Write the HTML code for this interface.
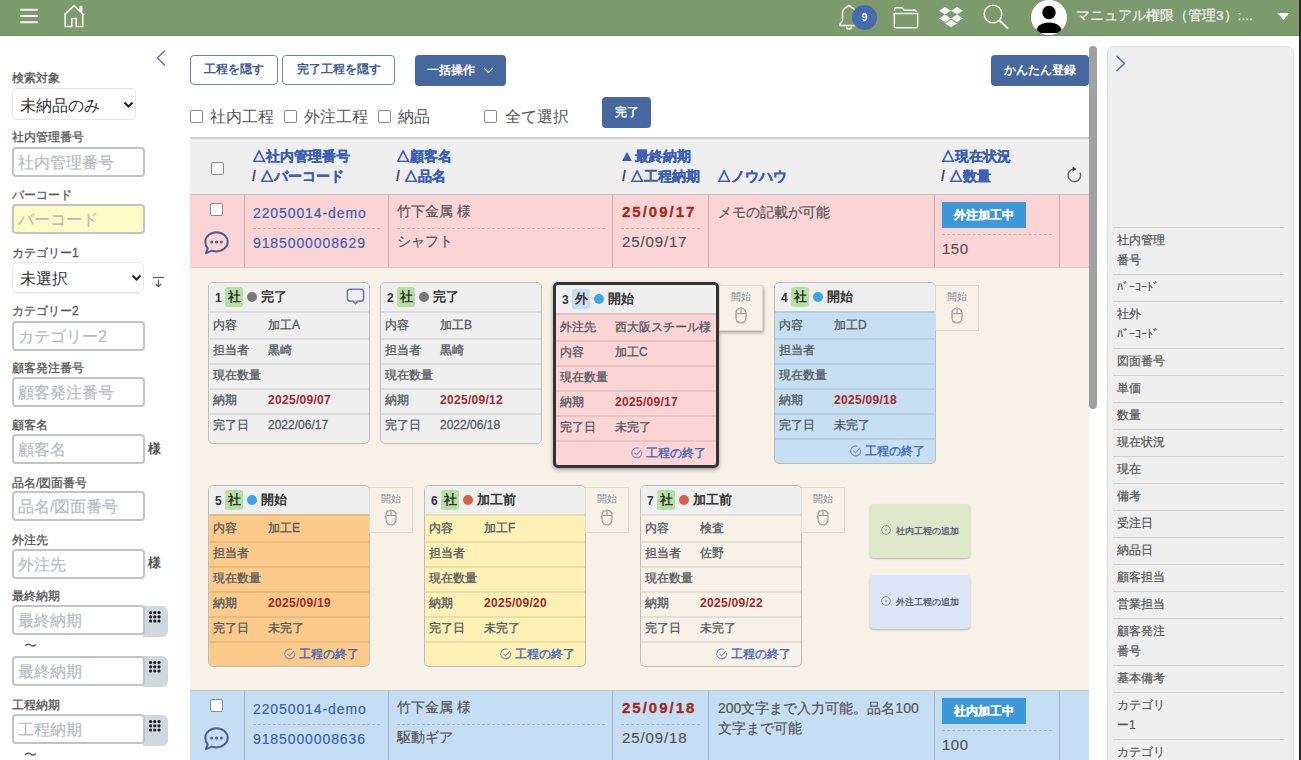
<!DOCTYPE html>
<html lang="ja">
<head>
<meta charset="utf-8">
<style>
*{box-sizing:border-box;margin:0;padding:0}
html,body{width:1301px;height:760px;overflow:hidden;background:#fff;font-family:"Liberation Sans",sans-serif;color:#444;position:relative}
.a{position:absolute}
#hdr{left:0;top:0;width:1301px;height:36px;background:#7b9a6e;border-bottom:1px solid #6f8d63}
.lbl{position:absolute;left:12px;font-size:12px;line-height:14px;font-weight:normal;-webkit-text-stroke:0.3px #555;color:#555;white-space:nowrap}
.inp{position:absolute;left:12px;width:133px;height:30px;border:2px solid #c3c3c3;border-radius:4px;background:#fff;font-size:16px;line-height:27px;padding-left:4px;color:#b3b9c1;white-space:nowrap;-webkit-text-stroke:0.15px #b3b9c1}
.sel{position:absolute;left:12px;border:1px solid #e6e6e6;border-radius:5px;background:#fff;font-size:16px;line-height:30px;padding-left:7px;color:#333;white-space:nowrap}
.cal{position:absolute;left:143px;width:25px;height:31px;background:#cdd9de;border-radius:0 6px 6px 0}
.sama{position:absolute;left:148px;font-size:13px;font-weight:bold;color:#555;line-height:14px}
.btno{position:absolute;top:55px;height:30px;border:1.5px solid #6b84b0;border-radius:4px;font-size:12px;font-weight:bold;color:#3e5d91;text-align:center;line-height:27px;white-space:nowrap;background:#fff}
.btnf{position:absolute;background:#46689f;border-radius:4px;color:#fff;font-size:12px;font-weight:bold;text-align:center;white-space:nowrap}
.cb{position:absolute;width:13px;height:13px;border:1.5px solid #8a8a8a;border-radius:2px;background:#fff}
.cbl{position:absolute;top:106.5px;font-size:16px;line-height:20px;color:#555;white-space:nowrap}
#tbl{left:190px;top:137px;width:899px;height:623px;overflow:hidden}
.th{position:absolute;font-size:14px;line-height:20.5px;font-weight:bold;color:#3b5fb5;white-space:nowrap;-webkit-text-stroke:0.25px #3b5fb5}
.th i{-webkit-text-stroke:0}
.th i{font-style:normal;color:#444}
.row{position:absolute;left:0;width:899px}
.vd{position:absolute;top:0;width:1px;background:rgba(0,0,0,.18)}
.lk{position:absolute;font-size:14px;line-height:18px;color:#3d5fb8;letter-spacing:0.9px;white-space:nowrap;-webkit-text-stroke:0.2px #3d5fb8}
.tx{position:absolute;font-size:14px;line-height:18px;color:#555;white-space:nowrap;-webkit-text-stroke:0.2px #555}
.dot{position:absolute;height:0;border-top:1px dashed rgba(0,0,0,.17)}
.badge{position:absolute;width:84px;height:26px;background:#3b98d9;color:#fff;font-size:12px;font-weight:bold;text-align:center;line-height:26px;-webkit-text-stroke:0.3px #fff}
.card{position:absolute;width:162px;border:1px solid #bdbdbd;border-radius:5px;background:#efefef;overflow:hidden;font-size:12px;color:#545a60}
.cr span{-webkit-text-stroke:0.3px #545a60}
.ch{height:28px;background:#efefef;position:relative;white-space:nowrap}
.ch .n{position:absolute;left:6px;top:8px;font-weight:bold;font-size:12px;line-height:14px;color:#333}
.ch .bg{position:absolute;left:16px;top:4px;width:18px;height:20px;border-radius:3px;background:#b7dea3;color:#333;font-weight:bold;font-size:13px;line-height:20px;text-align:center}
.ch .bg.o{background:#c9dcf4}
.ch .d{position:absolute;left:38px;top:9px;width:10px;height:10px;border-radius:50%;background:#777}
.ch .st{position:absolute;left:52px;top:6px;font-weight:bold;font-size:13px;line-height:16px;color:#333}
.cr{height:25px;border-top:2px solid rgba(0,0,0,.08);position:relative;white-space:nowrap;line-height:23px}
.cr.f1{height:26.5px;line-height:24.5px}
.cr .l{position:absolute;left:4px;top:-0.5px}
.cr .v{position:absolute;left:59px;top:-0.5px}
.cr .v.r{color:#a6282a;font-weight:bold;letter-spacing:0.3px;-webkit-text-stroke:0}
.cf{height:25px;border-top:2px solid rgba(0,0,0,.08);position:relative;text-align:right;padding-right:10px;line-height:22px;color:#4466b8;font-size:12px;white-space:nowrap;-webkit-text-stroke:0.35px #4466b8}
.hov{position:absolute;width:44px;height:46px;border:1px solid #dedad2;background:#f8f1e7;text-align:center;font-size:10px;color:#7d8797;line-height:12px;padding-top:5px}
.addb{position:absolute;width:100px;border-radius:4px;box-shadow:0 1px 2px rgba(0,0,0,.25);font-size:9px;font-weight:bold;color:#5a6378;text-align:center;white-space:nowrap}
#rp{left:1107px;top:46px;width:187px;height:720px;background:#efefef;border:1px solid #dcdcdc;border-radius:7px}
.rr{position:absolute;left:5px;width:171px;border-top:1px solid #cfcfcf;font-size:12px;line-height:20px;color:#555;padding:2px 4px;-webkit-text-stroke:0.2px #555}
</style>
</head>
<body>
<div id="hdr" class="a">
<svg class="a" style="left:19px;top:7px" width="20" height="18" viewBox="0 0 20 18"><g stroke="#eef5e6" stroke-width="2" stroke-linecap="round"><line x1="2" y1="2.7" x2="18" y2="2.7"/><line x1="2" y1="9" x2="18" y2="9"/><line x1="2" y1="15.3" x2="18" y2="15.3"/></g></svg>
<svg class="a" style="left:62px;top:4px" width="24" height="24" viewBox="0 0 24 24"><path d="M2.8 10.4L12 1.6l6.3 6V2.6h1.3v6.3l2 1.7 M3.2 10.3V22.5h6.6v-8h4.4v8h6.6V10.3" fill="none" stroke="#eef5e6" stroke-width="1.7" stroke-linejoin="round" stroke-linecap="round"/></svg>
<svg class="a" style="left:838px;top:3px" width="22" height="28" viewBox="0 0 22 28"><path d="M11 2.5c-.9 0-1.3.6-1.3 1.3-3.3.8-5.2 3.6-5.2 7v6.5L2 21.5v1h18v-1l-2.5-4.2V10.8c0-3.4-1.9-6.2-5.2-7 0-.7-.4-1.3-1.3-1.3z M8.5 23.5a2.5 2.5 0 0 0 5 0" fill="none" stroke="#eef5e6" stroke-width="1.5" stroke-linejoin="round"/></svg>
<div class="a" style="left:852px;top:5px;width:25px;height:25px;border-radius:50%;background:#4769ad;color:#fff;font-size:10px;font-weight:bold;text-align:center;line-height:25px">9</div>
<svg class="a" style="left:892px;top:6px" width="28" height="23" viewBox="0 0 28 23"><path d="M2.5 5V3.2c0-.9.6-1.5 1.5-1.5h6.2l2 2.6h10.6c.9 0 1.5.6 1.5 1.5V6 M2.3 7.5h23.4v12.8c0 .9-.6 1.5-1.5 1.5H3.8c-.9 0-1.5-.6-1.5-1.5z" fill="none" stroke="#eef5e6" stroke-width="1.5" stroke-linejoin="round"/></svg>
<svg class="a" style="left:938px;top:6px" width="26" height="23" viewBox="0 0 26 23"><g fill="#f3f7ef"><path d="M7 1L1 4.8l6 3.8 6-3.8z"/><path d="M19 1l-6 3.8 6 3.8 6-3.8z"/><path d="M1 12.4l6 3.8 6-3.8-6-3.8z"/><path d="M25 12.4l-6 3.8-6-3.8 6-3.8z"/><path d="M7 17.5l6 3.8 6-3.8-6-3.8z"/></g></svg>
<svg class="a" style="left:982px;top:3px" width="28" height="27" viewBox="0 0 28 27"><circle cx="11" cy="11" r="8.8" fill="none" stroke="#eef5e6" stroke-width="1.6"/><line x1="17.6" y1="17.6" x2="25.5" y2="25" stroke="#eef5e6" stroke-width="2" stroke-linecap="round"/></svg>
<div class="a" style="left:1031px;top:0px;width:36px;height:35px;border-radius:50%;background:#fff;overflow:hidden"><svg width="36" height="35" viewBox="0 0 36 35"><circle cx="18" cy="12.5" r="6.7" fill="#000"/><path d="M5 33c0-7 5.5-10.5 13-10.5S31 26 31 33z" fill="#000"/></svg></div>
<div class="a" style="left:1076px;top:7px;font-size:13.7px;line-height:18px;color:#eef3ea;white-space:nowrap;-webkit-text-stroke:0.25px #eef3ea">マニュアル権限（管理3）:...</div>
<svg class="a" style="left:1277px;top:12px" width="13" height="9" viewBox="0 0 13 9"><path d="M0.5 1h12l-6 7z" fill="#fff"/></svg>
</div>
<div class="a" style="left:1299px;top:0;width:2px;height:760px;background:#2b2b2b"></div>
<div class="lbl" style="top:71px">検索対象</div>
<div class="sel" style="top:88px;width:124px;height:32px;line-height:34px">未納品のみ</div>
<div class="lbl" style="top:130px">社内管理番号</div>
<div class="inp" style="top:147px">社内管理番号</div>
<div class="lbl" style="top:188px">バーコード</div>
<div class="inp" style="top:204px;background:#fdfbc6">バーコード</div>
<div class="lbl" style="top:246px">カテゴリー1</div>
<div class="sel" style="top:262px;width:132px;height:31px;line-height:32px">未選択</div>
<div class="lbl" style="top:304px">カテゴリー2</div>
<div class="inp" style="top:321px">カテゴリー2</div>
<div class="lbl" style="top:361px">顧客発注番号</div>
<div class="inp" style="top:377px">顧客発注番号</div>
<div class="lbl" style="top:418px">顧客名</div>
<div class="inp" style="top:434px">顧客名</div>
<div class="sama" style="top:442px">様</div>
<div class="lbl" style="top:476px">品名/図面番号</div>
<div class="inp" style="top:491px">品名/図面番号</div>
<div class="lbl" style="top:533px">外注先</div>
<div class="inp" style="top:549px">外注先</div>
<div class="sama" style="top:556px">様</div>
<div class="lbl" style="top:589px">最終納期</div>
<div class="cal" style="top:606px"></div>
<div class="inp" style="top:605px">最終納期</div>
<div class="cal" style="top:656px"></div>
<div class="inp" style="top:656px">最終納期</div>
<div class="lbl" style="top:698px">工程納期</div>
<div class="cal" style="top:715px"></div>
<div class="inp" style="top:714px">工程納期</div>
<svg class="a" style="left:123px;top:101px" width="11" height="8" viewBox="0 0 11 8"><path d="M1.5 1.5l4 4 4-4" fill="none" stroke="#222" stroke-width="2"/></svg><svg class="a" style="left:131px;top:274px" width="11" height="8" viewBox="0 0 11 8"><path d="M1.5 1.5l4 4 4-4" fill="none" stroke="#222" stroke-width="2"/></svg>
<svg class="a" style="left:152px;top:276px" width="13" height="12" viewBox="0 0 13 12"><g stroke="#555" stroke-width="1.2" fill="none"><line x1="1" y1="1.5" x2="12" y2="1.5"/><line x1="6.5" y1="3.5" x2="6.5" y2="10.5"/><path d="M3.8 8l2.7 2.7 2.7-2.7"/></g></svg>
<svg class="a" style="left:149px;top:611px" width="12" height="12" viewBox="0 0 12 12"><g fill="#1a1a1a"><circle cx="1.6" cy="1.6" r="1.6"/><circle cx="1.6" cy="5.8" r="1.6"/><circle cx="1.6" cy="10.0" r="1.6"/><circle cx="5.8" cy="1.6" r="1.6"/><circle cx="5.8" cy="5.8" r="1.6"/><circle cx="5.8" cy="10.0" r="1.6"/><circle cx="10.0" cy="1.6" r="1.6"/><circle cx="10.0" cy="5.8" r="1.6"/><circle cx="10.0" cy="10.0" r="1.6"/></g></svg><svg class="a" style="left:149px;top:661px" width="12" height="12" viewBox="0 0 12 12"><g fill="#1a1a1a"><circle cx="1.6" cy="1.6" r="1.6"/><circle cx="1.6" cy="5.8" r="1.6"/><circle cx="1.6" cy="10.0" r="1.6"/><circle cx="5.8" cy="1.6" r="1.6"/><circle cx="5.8" cy="5.8" r="1.6"/><circle cx="5.8" cy="10.0" r="1.6"/><circle cx="10.0" cy="1.6" r="1.6"/><circle cx="10.0" cy="5.8" r="1.6"/><circle cx="10.0" cy="10.0" r="1.6"/></g></svg><svg class="a" style="left:149px;top:720px" width="12" height="12" viewBox="0 0 12 12"><g fill="#1a1a1a"><circle cx="1.6" cy="1.6" r="1.6"/><circle cx="1.6" cy="5.8" r="1.6"/><circle cx="1.6" cy="10.0" r="1.6"/><circle cx="5.8" cy="1.6" r="1.6"/><circle cx="5.8" cy="5.8" r="1.6"/><circle cx="5.8" cy="10.0" r="1.6"/><circle cx="10.0" cy="1.6" r="1.6"/><circle cx="10.0" cy="5.8" r="1.6"/><circle cx="10.0" cy="10.0" r="1.6"/></g></svg>
<div class="a" style="left:24px;top:639px;font-size:13px;color:#555;line-height:14px">〜</div>
<div class="a" style="left:24px;top:748px;font-size:13px;color:#555;line-height:14px">〜</div>
<svg class="a" style="left:155px;top:49px" width="12" height="18" viewBox="0 0 12 18"><path d="M10 1.5L2.5 9l7.5 7.5" fill="none" stroke="#5a74b8" stroke-width="1.5"/></svg>
<div class="btno" style="left:190px;width:88px">工程を隠す</div>
<div class="btno" style="left:282px;width:113px">完了工程を隠す</div>
<div class="btnf" style="left:415px;top:55px;width:91px;height:31px;line-height:31px;text-align:left;padding-left:12px">一括操作<svg class="a" style="left:68px;top:12px" width="11" height="7" viewBox="0 0 11 7"><path d="M1 1l4.5 4.5L10 1" fill="none" stroke="#d5deed" stroke-width="1.1"/></svg></div>
<div class="btnf" style="left:991px;top:55px;width:98px;height:31px;line-height:31px">かんたん登録</div>
<div class="btnf" style="left:602px;top:97px;width:49px;height:31px;line-height:31px">完了</div>
<div class="cb" style="left:190px;top:110px"></div><div class="cbl" style="left:210px">社内工程</div>
<div class="cb" style="left:284px;top:110px"></div><div class="cbl" style="left:304px">外注工程</div>
<div class="cb" style="left:378px;top:110px"></div><div class="cbl" style="left:398px">納品</div>
<div class="cb" style="left:484px;top:110px"></div><div class="cbl" style="left:505px">全て選択</div>
<div id="tbl" class="a"><div class="row" style="top:0;height:57px;background:#efefef;border-top:2px solid #cfcfcf"></div><div class="cb" style="left:21px;top:25px"></div><div class="th" style="left:62px;top:8.5px">△社内管理番号<br><i>/</i> △バーコード</div><div class="th" style="left:206px;top:8.5px">△顧客名<br><i>/</i> △品名</div><div class="th" style="left:432px;top:8.5px"><svg width="10" height="9" viewBox="0 0 10 9" style="vertical-align:0px;margin-right:3px"><path d="M5 0L10 9H0z" fill="#3b5fb5"/></svg>最終納期<br><i>/</i> △工程納期</div><div class="th" style="left:527px;top:29px">△ノウハウ</div><div class="th" style="left:751px;top:8.5px">△現在状況<br><i>/</i> △数量</div><svg class="a" style="left:876px;top:30px" width="16" height="16" viewBox="0 0 16 16"><path d="M8.2 2 A6.3 6.3 0 1 0 14 5.6" fill="none" stroke="#6a6a6a" stroke-width="1.5"/><path d="M6.6 -0.4 L10.6 2 L6.6 4.4 z" fill="#3a3a48"/></svg><div class="row" style="top:57px;height:75px;background:#fbd4d5;border-top:1px solid #c4c4c4"><div class="vd" style="left:54px;height:75px"></div><div class="vd" style="left:198px;height:75px"></div><div class="vd" style="left:422px;height:75px"></div><div class="vd" style="left:518px;height:75px"></div><div class="vd" style="left:744px;height:75px"></div><div class="vd" style="left:869px;height:75px"></div></div><div class="cb" style="left:20px;top:66px"></div><div class="a" style="left:13px;top:93px"><svg width="27" height="25" viewBox="0 0 27 25"><path d="M13.5 2.2c6.2 0 11.2 4.3 11.2 9.6S19.7 21.4 13.5 21.4c-1.6 0-3.1-.3-4.6-.8L3 23.2l1.7-4.8C3.1 16.7 2.3 14.4 2.3 11.8 2.3 6.5 7.3 2.2 13.5 2.2z" fill="none" stroke="#4f5d93" stroke-width="2" stroke-linejoin="round"/><circle cx="8.7" cy="12" r="1.5" fill="#4f5d93"/><circle cx="13.5" cy="12" r="1.5" fill="#4f5d93"/><circle cx="18.3" cy="12" r="1.5" fill="#4f5d93"/></svg></div><div class="lk" style="left:63px;top:67px">22050014-demo</div><div class="dot" style="left:63px;top:91px;width:127px"></div><div class="lk" style="left:63px;top:97px">9185000008629</div><div class="tx" style="left:207px;top:65px">竹下金属 様</div><div class="dot" style="left:207px;top:91px;width:208px"></div><div class="tx" style="left:207px;top:95px">シャフト</div><div class="tx" style="left:432px;top:66px;font-size:15px;font-weight:bold;color:#a52a1e;letter-spacing:2px;-webkit-text-stroke:0.3px #a52a1e">25/09/17</div><div class="dot" style="left:431px;top:91px;width:79px"></div><div class="tx" style="left:432px;top:96px;font-size:15px;letter-spacing:0.9px">25/09/17</div><div class="tx" style="left:528px;top:65px;width:210px;white-space:normal;line-height:20px">メモの記載が可能</div><div class="badge" style="left:752px;top:65px">外注加工中</div><div class="dot" style="left:752px;top:97px;width:110px"></div><div class="tx" style="left:752px;top:103px;font-size:15px;letter-spacing:0.5px">150</div><div class="row" style="top:130px;height:423px;background:#f8f1e7;border-top:1px solid #d0d0d0"></div></div>
<div class="card" style="left:208px;top:282px;width:162px;background:#efefef;"><div class="ch"><span class="n">1</span><span class="bg">社</span><span class="d" style="background:#777"></span><span class="st">完了</span><svg class="a" style="left:137px;top:5px" width="19" height="17" viewBox="0 0 19 17"><path d="M4 1.3h11a2.6 2.6 0 0 1 2.6 2.6v6.6a2.6 2.6 0 0 1-2.6 2.6h-3L9.5 15.6 7 13.1H4a2.6 2.6 0 0 1-2.6-2.6V3.9A2.6 2.6 0 0 1 4 1.3z" fill="none" stroke="#6f7db3" stroke-width="1.6" stroke-linejoin="round"/></svg></div><div class="cr f1"><span class="l">内容</span><span class="v">加工A</span></div><div class="cr"><span class="l">担当者</span><span class="v">黒崎</span></div><div class="cr"><span class="l">現在数量</span><span class="v"></span></div><div class="cr"><span class="l">納期</span><span class="v r">2025/09/07</span></div><div class="cr"><span class="l">完了日</span><span class="v">2022/06/17</span></div><div style="height:5px"></div></div><div class="card" style="left:380px;top:282px;width:162px;background:#efefef;"><div class="ch"><span class="n">2</span><span class="bg">社</span><span class="d" style="background:#777"></span><span class="st">完了</span></div><div class="cr f1"><span class="l">内容</span><span class="v">加工B</span></div><div class="cr"><span class="l">担当者</span><span class="v">黒崎</span></div><div class="cr"><span class="l">現在数量</span><span class="v"></span></div><div class="cr"><span class="l">納期</span><span class="v r">2025/09/12</span></div><div class="cr"><span class="l">完了日</span><span class="v">2022/06/18</span></div><div style="height:5px"></div></div><div class="card" style="left:553px;top:282px;width:166px;background:#fbd4d5;border:3px solid #333;box-shadow:0 2px 4px rgba(0,0,0,.35);"><div class="ch"><span class="n">3</span><span class="bg o">外</span><span class="d" style="background:#3ba6e0"></span><span class="st">開始</span></div><div class="cr f1"><span class="l">外注先</span><span class="v">西大阪スチール様</span></div><div class="cr"><span class="l">内容</span><span class="v">加工C</span></div><div class="cr"><span class="l">現在数量</span><span class="v"></span></div><div class="cr"><span class="l">納期</span><span class="v r">2025/09/17</span></div><div class="cr"><span class="l">完了日</span><span class="v">未完了</span></div><div class="cf"><svg width="12" height="12" viewBox="0 0 12 12" style="vertical-align:-2px;margin-right:3px"><path d="M10.6 4.6A5 5 0 1 1 7.8 1.3" fill="none" stroke="#7f8cc0" stroke-width="1.1"/><path d="M3.5 5.8l2 2 4.6-4.8" fill="none" stroke="#7f8cc0" stroke-width="1.1"/></svg>工程の終了</div></div><div class="hov" style="left:719px;top:285px;box-shadow:1px 2px 3px rgba(0,0,0,.3);">開始<br><svg width="12" height="17" viewBox="0 0 12 17" style="margin-top:4px"><rect x="1" y="1" width="10" height="15" rx="5" fill="none" stroke="#999" stroke-width="1.2"/><line x1="6" y1="1.5" x2="6" y2="6" stroke="#999" stroke-width="1.2"/><line x1="1.5" y1="6.5" x2="10.5" y2="6.5" stroke="#999" stroke-width="1"/></svg></div><div class="card" style="left:774px;top:282px;width:162px;background:#c6dff3;"><div class="ch"><span class="n">4</span><span class="bg">社</span><span class="d" style="background:#3ba6e0"></span><span class="st">開始</span></div><div class="cr f1"><span class="l">内容</span><span class="v">加工D</span></div><div class="cr"><span class="l">担当者</span><span class="v"></span></div><div class="cr"><span class="l">現在数量</span><span class="v"></span></div><div class="cr"><span class="l">納期</span><span class="v r">2025/09/18</span></div><div class="cr"><span class="l">完了日</span><span class="v">未完了</span></div><div class="cf"><svg width="12" height="12" viewBox="0 0 12 12" style="vertical-align:-2px;margin-right:3px"><path d="M10.6 4.6A5 5 0 1 1 7.8 1.3" fill="none" stroke="#7f8cc0" stroke-width="1.1"/><path d="M3.5 5.8l2 2 4.6-4.8" fill="none" stroke="#7f8cc0" stroke-width="1.1"/></svg>工程の終了</div></div><div class="hov" style="left:935px;top:285px;">開始<br><svg width="12" height="17" viewBox="0 0 12 17" style="margin-top:4px"><rect x="1" y="1" width="10" height="15" rx="5" fill="none" stroke="#999" stroke-width="1.2"/><line x1="6" y1="1.5" x2="6" y2="6" stroke="#999" stroke-width="1.2"/><line x1="1.5" y1="6.5" x2="10.5" y2="6.5" stroke="#999" stroke-width="1"/></svg></div><div class="card" style="left:208px;top:485px;width:162px;background:#fccb8c;"><div class="ch"><span class="n">5</span><span class="bg">社</span><span class="d" style="background:#3ba6e0"></span><span class="st">開始</span></div><div class="cr f1"><span class="l">内容</span><span class="v">加工E</span></div><div class="cr"><span class="l">担当者</span><span class="v"></span></div><div class="cr"><span class="l">現在数量</span><span class="v"></span></div><div class="cr"><span class="l">納期</span><span class="v r">2025/09/19</span></div><div class="cr"><span class="l">完了日</span><span class="v">未完了</span></div><div class="cf"><svg width="12" height="12" viewBox="0 0 12 12" style="vertical-align:-2px;margin-right:3px"><path d="M10.6 4.6A5 5 0 1 1 7.8 1.3" fill="none" stroke="#7f8cc0" stroke-width="1.1"/><path d="M3.5 5.8l2 2 4.6-4.8" fill="none" stroke="#7f8cc0" stroke-width="1.1"/></svg>工程の終了</div></div><div class="hov" style="left:369px;top:487px;">開始<br><svg width="12" height="17" viewBox="0 0 12 17" style="margin-top:4px"><rect x="1" y="1" width="10" height="15" rx="5" fill="none" stroke="#999" stroke-width="1.2"/><line x1="6" y1="1.5" x2="6" y2="6" stroke="#999" stroke-width="1.2"/><line x1="1.5" y1="6.5" x2="10.5" y2="6.5" stroke="#999" stroke-width="1"/></svg></div><div class="card" style="left:424px;top:485px;width:162px;background:#fdf1b6;"><div class="ch"><span class="n">6</span><span class="bg">社</span><span class="d" style="background:#d35f47"></span><span class="st">加工前</span></div><div class="cr f1"><span class="l">内容</span><span class="v">加工F</span></div><div class="cr"><span class="l">担当者</span><span class="v"></span></div><div class="cr"><span class="l">現在数量</span><span class="v"></span></div><div class="cr"><span class="l">納期</span><span class="v r">2025/09/20</span></div><div class="cr"><span class="l">完了日</span><span class="v">未完了</span></div><div class="cf"><svg width="12" height="12" viewBox="0 0 12 12" style="vertical-align:-2px;margin-right:3px"><path d="M10.6 4.6A5 5 0 1 1 7.8 1.3" fill="none" stroke="#7f8cc0" stroke-width="1.1"/><path d="M3.5 5.8l2 2 4.6-4.8" fill="none" stroke="#7f8cc0" stroke-width="1.1"/></svg>工程の終了</div></div><div class="hov" style="left:585px;top:487px;">開始<br><svg width="12" height="17" viewBox="0 0 12 17" style="margin-top:4px"><rect x="1" y="1" width="10" height="15" rx="5" fill="none" stroke="#999" stroke-width="1.2"/><line x1="6" y1="1.5" x2="6" y2="6" stroke="#999" stroke-width="1.2"/><line x1="1.5" y1="6.5" x2="10.5" y2="6.5" stroke="#999" stroke-width="1"/></svg></div><div class="card" style="left:640px;top:485px;width:162px;background:#f8f1e7;"><div class="ch"><span class="n">7</span><span class="bg">社</span><span class="d" style="background:#d35f47"></span><span class="st">加工前</span></div><div class="cr f1"><span class="l">内容</span><span class="v">検査</span></div><div class="cr"><span class="l">担当者</span><span class="v">佐野</span></div><div class="cr"><span class="l">現在数量</span><span class="v"></span></div><div class="cr"><span class="l">納期</span><span class="v r">2025/09/22</span></div><div class="cr"><span class="l">完了日</span><span class="v">未完了</span></div><div class="cf"><svg width="12" height="12" viewBox="0 0 12 12" style="vertical-align:-2px;margin-right:3px"><path d="M10.6 4.6A5 5 0 1 1 7.8 1.3" fill="none" stroke="#7f8cc0" stroke-width="1.1"/><path d="M3.5 5.8l2 2 4.6-4.8" fill="none" stroke="#7f8cc0" stroke-width="1.1"/></svg>工程の終了</div></div><div class="hov" style="left:801px;top:487px;">開始<br><svg width="12" height="17" viewBox="0 0 12 17" style="margin-top:4px"><rect x="1" y="1" width="10" height="15" rx="5" fill="none" stroke="#999" stroke-width="1.2"/><line x1="6" y1="1.5" x2="6" y2="6" stroke="#999" stroke-width="1.2"/><line x1="1.5" y1="6.5" x2="10.5" y2="6.5" stroke="#999" stroke-width="1"/></svg></div><div class="addb" style="left:870px;top:504px;height:54px;line-height:54px;background:#dde8ca"><svg width="10" height="10" viewBox="0 0 10 10" style="vertical-align:-1px;margin-right:5px"><circle cx="5" cy="5" r="4.3" fill="none" stroke="#888" stroke-width="0.9"/><circle cx="5" cy="5" r="0.9" fill="#888"/></svg>社内工程の追加</div><div class="addb" style="left:870px;top:575px;height:54px;line-height:54px;background:#dce6f6"><svg width="10" height="10" viewBox="0 0 10 10" style="vertical-align:-1px;margin-right:5px"><circle cx="5" cy="5" r="4.3" fill="none" stroke="#888" stroke-width="0.9"/><circle cx="5" cy="5" r="0.9" fill="#888"/></svg>外注工程の追加</div>
<div id="tbl2" class="a" style="left:190px;top:690px;width:899px;height:70px;overflow:hidden"><div class="row" style="top:0px;height:75px;background:#c6def3;border-top:1px solid #c4c4c4"><div class="vd" style="left:54px;height:75px"></div><div class="vd" style="left:198px;height:75px"></div><div class="vd" style="left:422px;height:75px"></div><div class="vd" style="left:518px;height:75px"></div><div class="vd" style="left:744px;height:75px"></div><div class="vd" style="left:869px;height:75px"></div></div><div class="cb" style="left:20px;top:9px"></div><div class="a" style="left:13px;top:36px"><svg width="27" height="25" viewBox="0 0 27 25"><path d="M13.5 2.2c6.2 0 11.2 4.3 11.2 9.6S19.7 21.4 13.5 21.4c-1.6 0-3.1-.3-4.6-.8L3 23.2l1.7-4.8C3.1 16.7 2.3 14.4 2.3 11.8 2.3 6.5 7.3 2.2 13.5 2.2z" fill="none" stroke="#4f5d93" stroke-width="2" stroke-linejoin="round"/><circle cx="8.7" cy="12" r="1.5" fill="#4f5d93"/><circle cx="13.5" cy="12" r="1.5" fill="#4f5d93"/><circle cx="18.3" cy="12" r="1.5" fill="#4f5d93"/></svg></div><div class="lk" style="left:63px;top:10px">22050014-demo</div><div class="dot" style="left:63px;top:34px;width:127px"></div><div class="lk" style="left:63px;top:40px">9185000008636</div><div class="tx" style="left:207px;top:8px">竹下金属 様</div><div class="dot" style="left:207px;top:34px;width:208px"></div><div class="tx" style="left:207px;top:38px">駆動ギア</div><div class="tx" style="left:432px;top:9px;font-size:15px;font-weight:bold;color:#a52a1e;letter-spacing:2px;-webkit-text-stroke:0.3px #a52a1e">25/09/18</div><div class="dot" style="left:431px;top:34px;width:79px"></div><div class="tx" style="left:432px;top:39px;font-size:15px;letter-spacing:0.9px">25/09/18</div><div class="tx" style="left:528px;top:8px;width:210px;white-space:normal;line-height:20px">200文字まで入力可能。品名100文字まで可能</div><div class="badge" style="left:752px;top:8px">社内加工中</div><div class="dot" style="left:752px;top:40px;width:110px"></div><div class="tx" style="left:752px;top:46px;font-size:15px;letter-spacing:0.5px">100</div></div>
<div class="a" style="left:1089px;top:46px;width:8px;height:363px;background:#a1a1a1;border-radius:4px"></div>
<div id="rp" class="a"><svg class="a" style="left:7px;top:8px" width="11" height="17" viewBox="0 0 11 17"><path d="M1.5 1l8 7.5-8 7.5" fill="none" stroke="#5a74b8" stroke-width="1.5"/></svg><div class="rr" style="top:180.0px">社内管理<br>番号</div><div class="rr" style="top:226.9px">ﾊﾞｰｺｰﾄﾞ</div><div class="rr" style="top:253.9px">社外<br>ﾊﾞｰｺｰﾄﾞ</div><div class="rr" style="top:300.8px">図面番号</div><div class="rr" style="top:327.8px">単価</div><div class="rr" style="top:354.8px">数量</div><div class="rr" style="top:381.8px">現在状況</div><div class="rr" style="top:408.8px">現在</div><div class="rr" style="top:435.8px">備考</div><div class="rr" style="top:462.8px">受注日</div><div class="rr" style="top:489.8px">納品日</div><div class="rr" style="top:516.8px">顧客担当</div><div class="rr" style="top:543.8px">営業担当</div><div class="rr" style="top:570.8px">顧客発注<br>番号</div><div class="rr" style="top:617.7px">基本備考</div><div class="rr" style="top:644.7px">カテゴリ<br>ー1</div><div class="rr" style="top:691.6px">カテゴリ<br>ー2</div></div>
</body>
</html>
